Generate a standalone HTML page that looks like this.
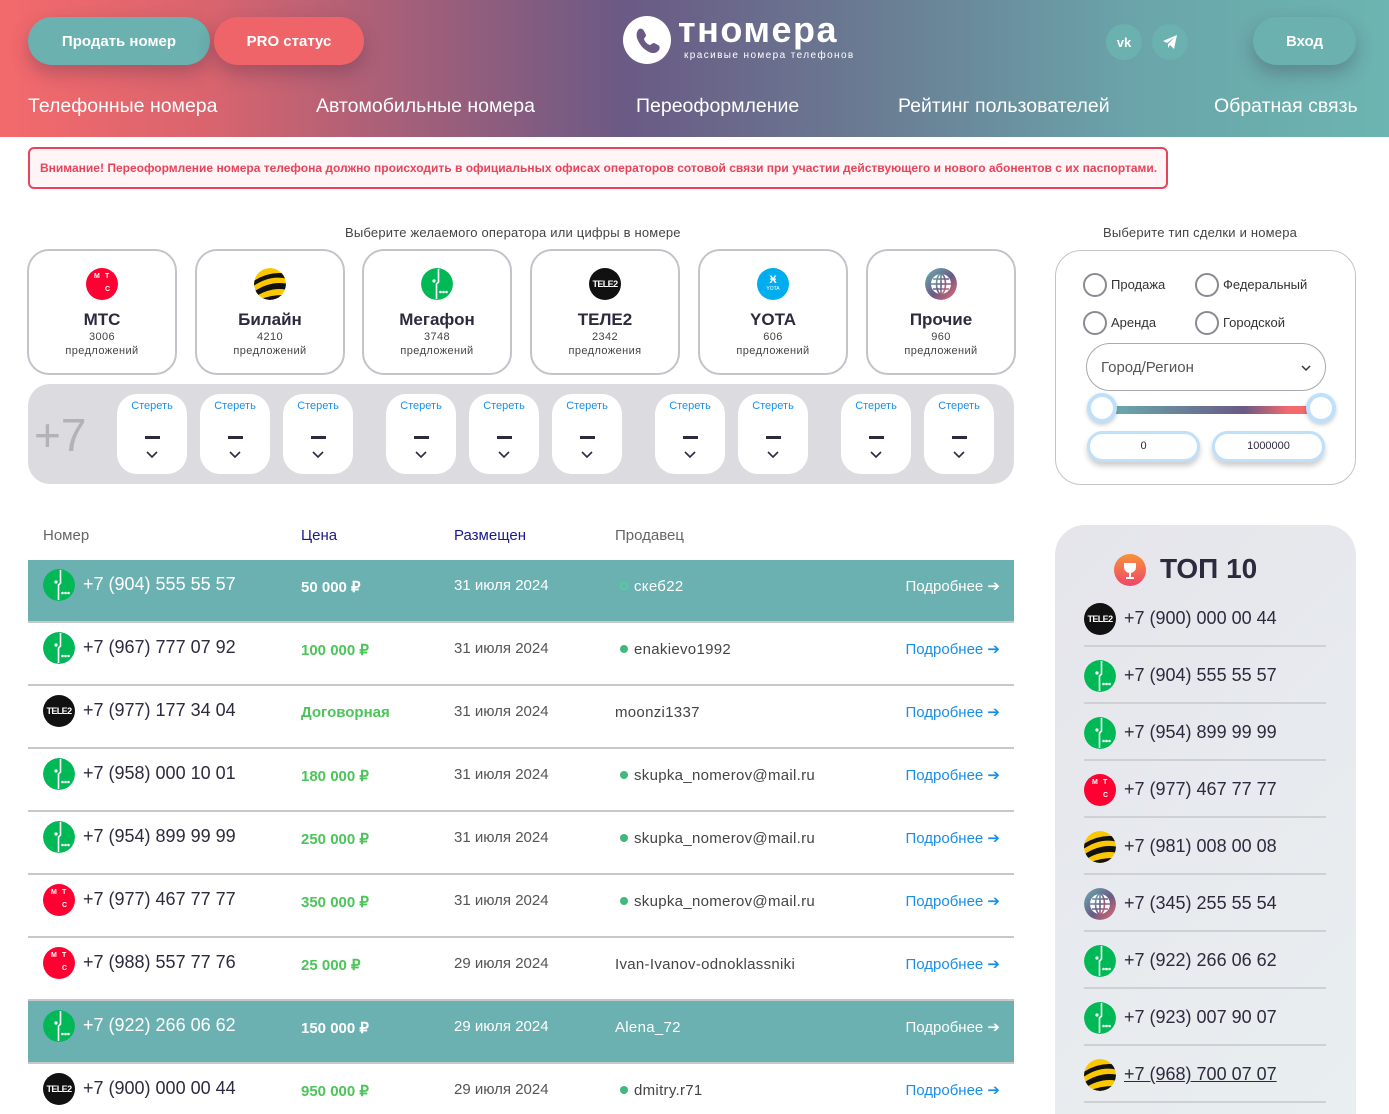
<!DOCTYPE html>
<html><head><meta charset="utf-8"><style>
*{box-sizing:border-box;margin:0;padding:0}
html,body{width:1389px;height:1114px;overflow:hidden}
body{background:#fff;font-family:"Liberation Sans",sans-serif;color:#2e2a3e;position:relative}
.a{position:absolute}
.hdr{left:0;top:0;width:1389px;height:137px;background:linear-gradient(90deg,#f36a6c 0%,#d9646e 15%,#6a5a85 45%,#6a7a92 62%,#6aa5aa 82%,#6cb5b1 100%)}
.btn{position:absolute;top:17px;height:48px;border-radius:24px;color:#fff;font-weight:bold;font-size:15px;display:flex;align-items:center;justify-content:center;box-shadow:0 8px 18px rgba(60,40,70,.3)}
.nav{position:absolute;top:95px;color:#fff;font-size:19.5px}
.soc{position:absolute;top:24px;width:36px;height:36px;border-radius:50%;background:#6ab1b0;display:flex;align-items:center;justify-content:center;color:#fff;font-weight:bold;font-size:13px}
.alert{left:28px;top:147px;width:1140px;height:42px;border:2px solid #e8435a;border-radius:6px;background:#fff5f6;color:#e8435a;font-size:12px;font-weight:bold;padding-left:10px;line-height:38px;letter-spacing:0}
.lbl{font-size:13px;color:#444;letter-spacing:.2px}
.card{position:absolute;top:249px;width:150px;height:126px;border:2px solid #c4c3ca;border-radius:22px;text-align:center}
.card b{display:block;font-size:17px;margin-top:10px;color:#2e2a3e}
.card s{display:block;text-decoration:none;font-size:11px;color:#444;line-height:14px;letter-spacing:.4px}
.ic{width:32px;height:32px;border-radius:50%;display:block}
.t2{background:#111;color:#fff;font-size:9px;font-weight:bold;display:flex;align-items:center;justify-content:center;letter-spacing:-.6px}
.mts{background:#ff0032;position:relative;color:#fff;font-size:7px;font-weight:bold}
.mts i{position:absolute;font-style:normal}
.panel{left:28px;top:384px;width:986px;height:100px;background:#dcdbe0;border-radius:22px}
.dg{position:absolute;top:10px;width:70px;height:80px;background:#fff;border-radius:20px;text-align:center}
.dg u{display:block;text-decoration:none;color:#1a8fe8;font-size:11px;margin-top:6px}
.dg b{display:block;width:15px;height:3px;background:#2e2a3e;margin:24px auto 0}
.dg svg{display:block;margin:12px auto 0}
.rp{left:1055px;top:250px;width:301px;height:235px;border:1px solid #c4c3ca;border-radius:26px}
.rad{position:absolute;width:24px;height:24px;border:2px solid #8a8a92;border-radius:50%}
.rt{position:absolute;font-size:13px;color:#333}
.row{position:absolute;left:28px;width:986px;height:63px;border-bottom:2px solid #c8c8cc}
.row.hl{background:#6bb1b1}
.row .ic{position:absolute;left:15px;top:9px}
.num{position:absolute;left:55px;top:14px;font-size:18px;color:#2e2a3e}
.pr{position:absolute;left:273px;top:18px;font-size:15px;font-weight:bold;color:#4cc45a}
.dt{position:absolute;left:426px;top:17px;font-size:15px;color:#555}
.sl{position:absolute;left:587px;top:18px;font-size:15px;color:#444;letter-spacing:.3px}
.sl i{display:inline-block;width:8px;height:8px;border-radius:50%;background:#3fba7a;margin:0 6px 1px 5px}
.mr{position:absolute;right:14px;top:17px;font-size:15px;color:#1a8fe8}
.hl .num,.hl .pr,.hl .dt,.hl .sl,.hl .mr{color:#fff}
.top{left:1055px;top:525px;width:301px;height:620px;background:linear-gradient(135deg,#e5e5eb,#e9eff1);border-radius:30px}
.ti{position:absolute;left:29px;width:242px;height:57px;border-bottom:2px solid #cfd0d4}
.ti .ic{position:absolute;left:0;top:13px}
.ti span{position:absolute;left:40px;top:18px;font-size:18px;color:#2e2a3e}
</style></head><body>
<svg width="0" height="0" style="position:absolute">
<defs>
<symbol id="mega" viewBox="0 0 32 32"><circle cx="16" cy="16" r="16" fill="#00b956"/><path d="M17.5 1v13l-2 2v15" stroke="#fff" stroke-width="1.6" fill="none"/><circle cx="13" cy="13" r="1.6" fill="#fff"/><circle cx="19.5" cy="24" r="1.3" fill="#fff"/><circle cx="22.5" cy="24" r="1.3" fill="#fff"/><circle cx="25.5" cy="24" r="1.3" fill="#fff"/></symbol>
<clipPath id="cc"><circle cx="16" cy="16" r="16"/></clipPath>
<symbol id="bee" viewBox="0 0 32 32"><circle cx="16" cy="16" r="16" fill="#fbc800"/><g clip-path="url(#cc)" fill="#111"><path d="M-2 14 Q16 2 34 6 L34 11 Q16 6 -2 19Z"/><path d="M-2 25 Q16 12 34 16 L34 22 Q16 18 -2 31Z"/><path d="M0 34 Q16 26 34 27 L34 34Z"/></g></symbol>
<linearGradient id="gg" x1="0" y1="0" x2="1" y2="1"><stop offset="0" stop-color="#6bb1b1"/><stop offset=".55" stop-color="#6a5a85"/><stop offset="1" stop-color="#f06a6e"/></linearGradient>
<symbol id="glb" viewBox="0 0 32 32"><circle cx="16" cy="16" r="16" fill="url(#gg)"/><circle cx="16" cy="16" r="10" fill="#fff"/><g stroke="url(#gg)" stroke-width="1.6" fill="none"><ellipse cx="16" cy="16" rx="4.5" ry="10"/><path d="M16 6v20M6 16h20M8 11h16M8 21h16"/></g></symbol>
</defs></svg>

<div class="a hdr"></div>
<div class="btn" style="left:28px;width:182px;background:#6ab1b0">Продать номер</div>
<div class="btn" style="left:214px;width:150px;background:#ef6468">PRO статус</div>
<div class="a" style="left:623px;top:16px;width:48px;height:48px;border-radius:50%;background:#fff"><svg width="48" height="48" viewBox="0 0 48 48"><path d="M16 13c2-1 4 0 5 2l2 4c0 2-2 3-2 4 1 3 3 5 6 6 1 0 2-2 4-2l4 2c2 1 2 3 1 5-2 3-6 4-10 2-6-3-10-8-12-14-1-4 0-7 2-9z" fill="#6a5a85"/></svg></div>
<div class="a" style="left:678px;top:11px;color:#fff;font-size:36px;font-weight:bold;letter-spacing:1.5px;line-height:38px">тномера</div>
<div class="a" style="left:684px;top:50px;color:#fff;font-size:10px;letter-spacing:1.4px">красивые номера телефонов</div>
<div class="soc" style="left:1106px">vk</div>
<div class="soc" style="left:1152px"><svg width="16" height="16" viewBox="0 0 16 16"><path d="M1 7L15 1 12 15 8 11 6 14 6 10 13 3 5 9z" fill="#fff"/></svg></div>
<div class="btn" style="left:1253px;width:103px;background:#6ab1b0">Вход</div>
<div class="nav" style="left:28px">Телефонные номера</div>
<div class="nav" style="left:316px">Автомобильные номера</div>
<div class="nav" style="left:636px">Переоформление</div>
<div class="nav" style="left:898px">Рейтинг пользователей</div>
<div class="nav" style="left:1214px">Обратная связь</div>

<div class="a alert">Внимание! Переоформление номера телефона должно происходить в официальных офисах операторов сотовой связи при участии действующего и нового абонентов с их паспортами.</div>

<div class="a lbl" style="left:345px;top:225px">Выберите желаемого оператора или цифры в номере</div>
<div class="a lbl" style="left:1103px;top:225px">Выберите тип сделки и номера</div>

<div class="card" style="left:27px"><div class="ic mts" style="margin:17px auto 0"><i style="left:8px;top:5px">М</i><i style="left:19px;top:5px">Т</i><i style="left:19px;top:18px">С</i></div><b>МТС</b><s>3006</s><s>предложений</s></div>
<div class="card" style="left:195px"><svg class="ic" style="margin:17px auto 0"><use href="#bee"/></svg><b>Билайн</b><s>4210</s><s>предложений</s></div>
<div class="card" style="left:362px"><svg class="ic" style="margin:17px auto 0"><use href="#mega"/></svg><b>Мегафон</b><s>3748</s><s>предложений</s></div>
<div class="card" style="left:530px"><div class="ic t2" style="margin:17px auto 0">TELE2</div><b>ТЕЛЕ2</b><s>2342</s><s>предложения</s></div>
<div class="card" style="left:698px"><div class="ic" style="margin:17px auto 0;background:#00aeef;color:#fff;text-align:center;font-size:5px;line-height:7px;padding-top:7px"><span style="font-size:11px;font-weight:bold;line-height:11px;display:block">Ӿ</span>YOTA</div><b>YOTA</b><s>606</s><s>предложений</s></div>
<div class="card" style="left:866px"><svg class="ic" style="margin:17px auto 0"><use href="#glb"/></svg><b>Прочие</b><s>960</s><s>предложений</s></div>

<div class="a panel">
<div class="a" style="left:6px;top:24px;font-size:46px;color:#b3b2b8">+7</div>
<div class="dg" style="left:89px"><u>Стереть</u><b></b><svg width="12" height="8"><path d="M1 1l5 5 5-5" stroke="#2e2a3e" stroke-width="1.6" fill="none"/></svg></div>
<div class="dg" style="left:172px"><u>Стереть</u><b></b><svg width="12" height="8"><path d="M1 1l5 5 5-5" stroke="#2e2a3e" stroke-width="1.6" fill="none"/></svg></div>
<div class="dg" style="left:255px"><u>Стереть</u><b></b><svg width="12" height="8"><path d="M1 1l5 5 5-5" stroke="#2e2a3e" stroke-width="1.6" fill="none"/></svg></div>
<div class="dg" style="left:358px"><u>Стереть</u><b></b><svg width="12" height="8"><path d="M1 1l5 5 5-5" stroke="#2e2a3e" stroke-width="1.6" fill="none"/></svg></div>
<div class="dg" style="left:441px"><u>Стереть</u><b></b><svg width="12" height="8"><path d="M1 1l5 5 5-5" stroke="#2e2a3e" stroke-width="1.6" fill="none"/></svg></div>
<div class="dg" style="left:524px"><u>Стереть</u><b></b><svg width="12" height="8"><path d="M1 1l5 5 5-5" stroke="#2e2a3e" stroke-width="1.6" fill="none"/></svg></div>
<div class="dg" style="left:627px"><u>Стереть</u><b></b><svg width="12" height="8"><path d="M1 1l5 5 5-5" stroke="#2e2a3e" stroke-width="1.6" fill="none"/></svg></div>
<div class="dg" style="left:710px"><u>Стереть</u><b></b><svg width="12" height="8"><path d="M1 1l5 5 5-5" stroke="#2e2a3e" stroke-width="1.6" fill="none"/></svg></div>
<div class="dg" style="left:813px"><u>Стереть</u><b></b><svg width="12" height="8"><path d="M1 1l5 5 5-5" stroke="#2e2a3e" stroke-width="1.6" fill="none"/></svg></div>
<div class="dg" style="left:896px"><u>Стереть</u><b></b><svg width="12" height="8"><path d="M1 1l5 5 5-5" stroke="#2e2a3e" stroke-width="1.6" fill="none"/></svg></div>
</div>

<div class="a rp">
<div class="rad" style="left:27px;top:22px"></div><div class="rt" style="left:55px;top:26px">Продажа</div>
<div class="rad" style="left:139px;top:22px"></div><div class="rt" style="left:167px;top:26px">Федеральный</div>
<div class="rad" style="left:27px;top:60px"></div><div class="rt" style="left:55px;top:64px">Аренда</div>
<div class="rad" style="left:139px;top:60px"></div><div class="rt" style="left:167px;top:64px">Городской</div>
<div class="a" style="left:30px;top:92px;width:240px;height:48px;border:1px solid #a9a8b0;border-radius:24px;font-size:15px;color:#555;padding:15px 0 0 14px">Город/Регион<svg style="position:absolute;right:14px;top:21px" width="10" height="7"><path d="M1 1l4 4 4-4" stroke="#333" stroke-width="1.5" fill="none"/></svg></div>
<div class="a" style="left:45px;top:155px;width:220px;height:8px;background:linear-gradient(90deg,#6bb1b1,#6a5a85 65%,#f06a6e 85%,#f06a6e)"></div>
<div class="a" style="left:31px;top:142px;width:30px;height:30px;border-radius:50%;background:#fff;border:4px solid #bfe0fb;box-shadow:0 2px 4px rgba(0,0,0,.2)"></div>
<div class="a" style="left:250px;top:142px;width:30px;height:30px;border-radius:50%;background:#fff;border:4px solid #bfe0fb;box-shadow:0 2px 4px rgba(0,0,0,.2)"></div>
<div class="a" style="left:31px;top:180px;width:113px;height:31px;border-radius:16px;background:#fff;border:3px solid #bfe0fb;box-shadow:0 4px 6px rgba(0,0,0,.2);text-align:center;font-size:11px;line-height:25px">0</div>
<div class="a" style="left:156px;top:180px;width:113px;height:31px;border-radius:16px;background:#fff;border:3px solid #bfe0fb;box-shadow:0 4px 6px rgba(0,0,0,.2);text-align:center;font-size:11px;line-height:25px">1000000</div>
</div>

<div class="a" style="left:43px;top:527px;font-size:15px;color:#666">Номер</div>
<div class="a" style="left:301px;top:527px;font-size:15px;color:#1a1a8a">Цена</div>
<div class="a" style="left:454px;top:527px;font-size:15px;color:#1a1a8a">Размещен</div>
<div class="a" style="left:615px;top:527px;font-size:15px;color:#666">Продавец</div>

<div class="row hl" style="top:560px"><svg class="ic"><use href="#mega"/></svg><div class="num">+7 (904) 555 55 57</div><div class="pr">50 000 ₽</div><div class="dt">31 июля 2024</div><div class="sl"><i style="background:none;border:1.5px solid #3fe08a"></i>скеб22</div><div class="mr">Подробнее ➔</div></div>
<div class="row" style="top:623px"><svg class="ic"><use href="#mega"/></svg><div class="num">+7 (967) 777 07 92</div><div class="pr">100 000 ₽</div><div class="dt">31 июля 2024</div><div class="sl"><i></i>enakievo1992</div><div class="mr">Подробнее ➔</div></div>
<div class="row" style="top:686px"><div class="ic t2">TELE2</div><div class="num">+7 (977) 177 34 04</div><div class="pr">Договорная</div><div class="dt">31 июля 2024</div><div class="sl">moonzi1337</div><div class="mr">Подробнее ➔</div></div>
<div class="row" style="top:749px"><svg class="ic"><use href="#mega"/></svg><div class="num">+7 (958) 000 10 01</div><div class="pr">180 000 ₽</div><div class="dt">31 июля 2024</div><div class="sl"><i></i>skupka_nomerov@mail.ru</div><div class="mr">Подробнее ➔</div></div>
<div class="row" style="top:812px"><svg class="ic"><use href="#mega"/></svg><div class="num">+7 (954) 899 99 99</div><div class="pr">250 000 ₽</div><div class="dt">31 июля 2024</div><div class="sl"><i></i>skupka_nomerov@mail.ru</div><div class="mr">Подробнее ➔</div></div>
<div class="row" style="top:875px"><div class="ic mts"><i style="left:8px;top:5px">М</i><i style="left:19px;top:5px">Т</i><i style="left:19px;top:18px">С</i></div><div class="num">+7 (977) 467 77 77</div><div class="pr">350 000 ₽</div><div class="dt">31 июля 2024</div><div class="sl"><i></i>skupka_nomerov@mail.ru</div><div class="mr">Подробнее ➔</div></div>
<div class="row" style="top:938px"><div class="ic mts"><i style="left:8px;top:5px">М</i><i style="left:19px;top:5px">Т</i><i style="left:19px;top:18px">С</i></div><div class="num">+7 (988) 557 77 76</div><div class="pr">25 000 ₽</div><div class="dt">29 июля 2024</div><div class="sl">Ivan-Ivanov-odnoklassniki</div><div class="mr">Подробнее ➔</div></div>
<div class="row hl" style="top:1001px"><svg class="ic"><use href="#mega"/></svg><div class="num">+7 (922) 266 06 62</div><div class="pr">150 000 ₽</div><div class="dt">29 июля 2024</div><div class="sl">Alena_72</div><div class="mr">Подробнее ➔</div></div>
<div class="row" style="top:1064px"><div class="ic t2">TELE2</div><div class="num">+7 (900) 000 00 44</div><div class="pr">950 000 ₽</div><div class="dt">29 июля 2024</div><div class="sl"><i></i>dmitry.r71</div><div class="mr">Подробнее ➔</div></div>

<div class="a top">
<div class="a" style="left:59px;top:29px;width:32px;height:32px;border-radius:50%;background:linear-gradient(180deg,#f7923a,#f0456a)"><svg width="32" height="32"><path d="M10 9h12v4a6 6 0 0 1-12 0z M15 19h2v4h3v2h-8v-2h3z" fill="#fff"/></svg></div>
<div class="a" style="left:105px;top:28px;font-size:28px;font-weight:bold;color:#2e2a3e">ТОП 10</div>
<div class="ti" style="top:65px"><div class="ic t2">TELE2</div><span>+7 (900) 000 00 44</span></div>
<div class="ti" style="top:122px"><svg class="ic"><use href="#mega"/></svg><span>+7 (904) 555 55 57</span></div>
<div class="ti" style="top:179px"><svg class="ic"><use href="#mega"/></svg><span>+7 (954) 899 99 99</span></div>
<div class="ti" style="top:236px"><div class="ic mts"><i style="left:8px;top:5px">М</i><i style="left:19px;top:5px">Т</i><i style="left:19px;top:18px">С</i></div><span>+7 (977) 467 77 77</span></div>
<div class="ti" style="top:293px"><svg class="ic"><use href="#bee"/></svg><span>+7 (981) 008 00 08</span></div>
<div class="ti" style="top:350px"><svg class="ic"><use href="#glb"/></svg><span>+7 (345) 255 55 54</span></div>
<div class="ti" style="top:407px"><svg class="ic"><use href="#mega"/></svg><span>+7 (922) 266 06 62</span></div>
<div class="ti" style="top:464px"><svg class="ic"><use href="#mega"/></svg><span>+7 (923) 007 90 07</span></div>
<div class="ti" style="top:521px"><svg class="ic"><use href="#bee"/></svg><span style="text-decoration:underline">+7 (968) 700 07 07</span></div>
</div>
</body></html>
